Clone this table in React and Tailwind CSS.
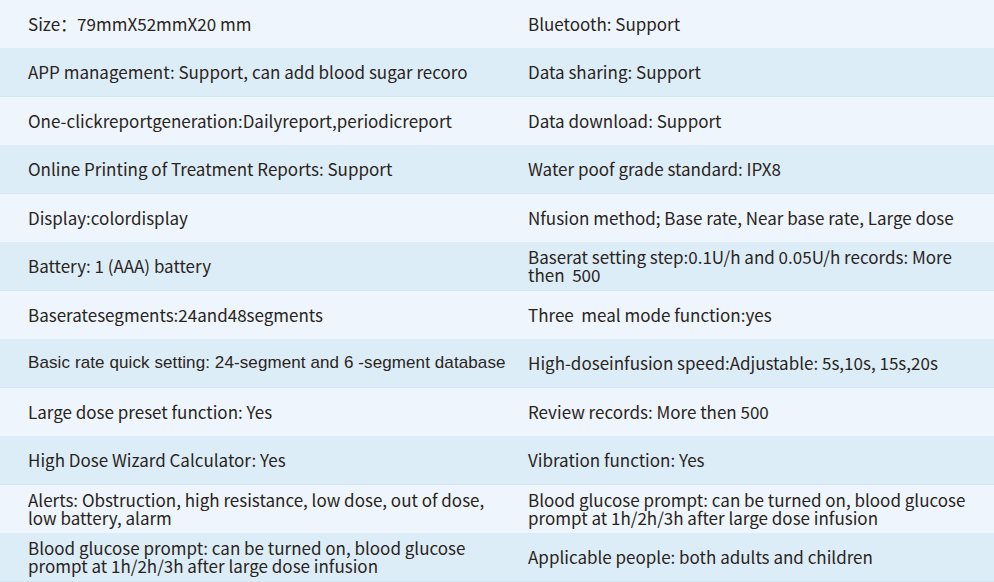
// Spec table - 产品参数

const rows = [
  ['Size：79mmX52mmX20 mm', 'Bluetooth: Support'],
  ['APP management: Support, can add blood sugar recoro', 'Data sharing: Support'],
  ['One-clickreportgeneration:Dailyreport,periodicreport', 'Data download: Support'],
  ['Online Printing of Treatment Reports: Support', 'Water poof grade standard: IPX8'],
  ['Display:colordisplay', 'Nfusion method; Base rate, Near base rate, Large dose'],
  ['Battery: 1 (AAA) battery', 'Baserat setting step:0.1U/h and 0.05U/h records: More then  500'],
  ['Baseratesegments:24and48segments', 'Three  meal mode function:yes'],
  ['Basic rate quick setting: 24-segment and 6 -segment database', 'High-doseinfusion speed:Adjustable: 5s,10s, 15s,20s'],
  ['Large dose preset function: Yes', 'Review records: More then 500'],
  ['High Dose Wizard Calculator: Yes', 'Vibration function: Yes'],
  ['Alerts: Obstruction, high resistance, low dose, out of dose, low battery, alarm', 'Blood glucose prompt: can be turned on, blood glucose prompt at 1h/2h/3h after large dose infusion'],
  ['Blood glucose prompt: can be turned on, blood glucose prompt at 1h/2h/3h after large dose infusion', 'Applicable people: both adults and children'],
]

export default function App() {
  return (
    <div className="w-[994px] h-[582px] flex flex-col text-[17px] leading-[18px] text-[#2a2420] font-['Noto_Sans_CJK_SC','Noto_Sans',sans-serif]">
      {rows.map(([left, right], i) => (
        <div
          key={i}
          className={
            i % 2 === 0
              ? 'flex-1 grid grid-cols-[500px_1fr] items-center bg-[#eef5fc]'
              : 'flex-1 grid grid-cols-[500px_1fr] items-center bg-[#ddedf8] border-b border-[#d2e6f5]'
          }
        >
          <div
            className={
              i === 7
                ? "pl-[28px] whitespace-nowrap font-['Liberation_Sans',Arial,sans-serif] text-[17px] tracking-[0.1px]"
                : 'pl-[28px] pr-[4px] whitespace-pre-wrap'
            }
          >
            {left}
          </div>
          <div className="pl-[28px] pr-[20px] whitespace-pre-wrap">{right}</div>
        </div>
      ))}
    </div>
  )
}
